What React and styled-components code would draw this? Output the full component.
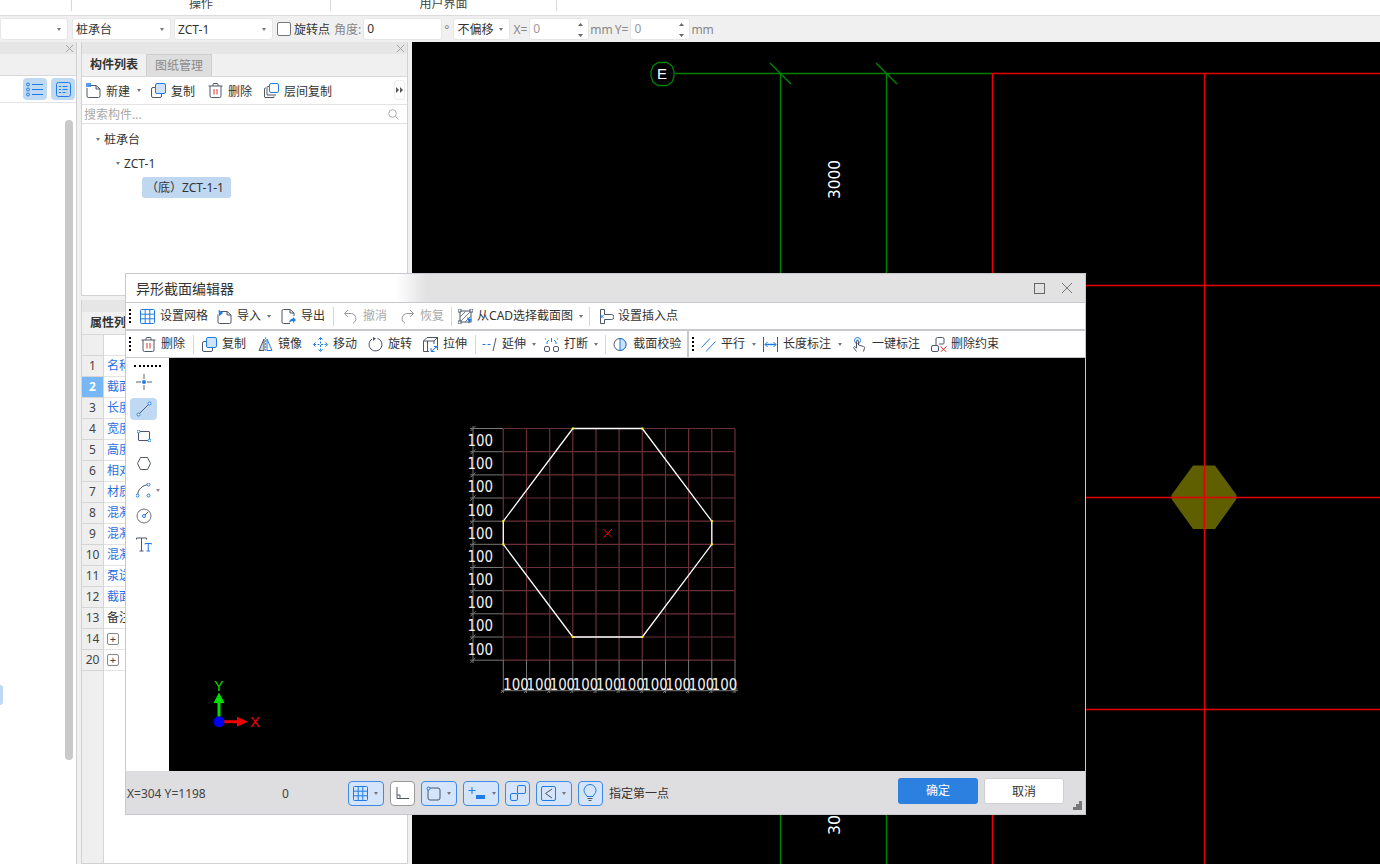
import React from "react";
import styled, { createGlobalStyle } from "styled-components";

const DARK = "#4f5668";
const BLUE = "#1f7ce6";
const UI_FONT = `"Noto Sans", "Noto Sans CJK SC", sans-serif`;

const Global = createGlobalStyle`
  html, body { margin: 0; padding: 0; background: #f0f0f0; }
  * { box-sizing: border-box; }
`;

const Page = styled.div`
  position: relative;
  width: 1380px;
  height: 864px;
  overflow: hidden;
  display: flex;
  flex-direction: column;
  background: #f0f0f0;
  font-family: ${UI_FONT};
  font-size: 12px;
  color: #333;
`;

/* ribbon + option bar */
const Ribbon = styled.div`
  height: 16px;
  flex: none;
  display: flex;
  background: #fff;
  border-bottom: 1px solid #dcdcdc;
`;
const RibbonCell = styled.div`
  width: ${(p) => p.$w}px;
  height: 11px;
  line-height: 8px;
  text-align: center;
  color: #444;
  border-right: ${(p) => (p.$plain ? "none" : "1px solid #d8d8d8")};
`;
const OptionBar = styled.div`
  height: 26px;
  flex: none;
  display: flex;
  align-items: center;
  background: #f0f0f0;
`;
const Select = styled.div`
  width: ${(p) => p.$w}px;
  margin-left: ${(p) => p.$ml || 0}px;
  height: 22px;
  display: flex;
  align-items: center;
  justify-content: space-between;
  padding: 0 6px 0 3px;
  background: #fff;
  border: 1px solid #e6e6e6;
  border-radius: 3px;
  color: #333;
`;
const Caret = styled.i`
  flex: none;
  width: 0;
  height: 0;
  margin-left: ${(p) => p.$ml || 0}px;
  border-left: 2.5px solid transparent;
  border-right: 2.5px solid transparent;
  border-top: 3px solid #777;
`;
const Check = styled.div`
  width: 14px;
  height: 14px;
  margin-left: 4px;
  background: #fff;
  border: 1px solid #777;
  border-radius: 2px;
`;
const OptLabel = styled.span`
  margin-left: ${(p) => p.$ml || 0}px;
  color: ${(p) => p.$c || "#888"};
  white-space: nowrap;
`;
const NumField = styled.div`
  position: relative;
  width: ${(p) => p.$w}px;
  margin-left: ${(p) => p.$ml || 0}px;
  height: 22px;
  line-height: 20px;
  padding-left: 3px;
  background: #fff;
  border: 1px solid #e6e6e6;
  border-radius: 3px;
  color: ${(p) => p.$c || "#999"};
`;
const Spin = styled.svg`
  position: absolute;
  right: 4px;
  top: 3px;
`;

/* main area */
const Main = styled.div`
  flex: 1;
  min-height: 0;
  display: flex;
`;
const LeftPanel = styled.div`
  position: relative;
  width: 77px;
  flex: none;
  display: flex;
  flex-direction: column;
  background: #fff;
  border-right: 1px solid #cfcfcf;
`;
const PanelHead = styled.div`
  height: 12px;
  flex: none;
  display: flex;
  justify-content: flex-end;
  align-items: center;
  padding-right: 3px;
  background: #e6e6e6;
  color: #999;
`;
const LeftTabs = styled.div`
  height: 22px;
  flex: none;
  background: #f0f0f0;
  border-bottom: 1px solid #d8d8d8;
`;
const LeftTools = styled.div`
  height: 27px;
  flex: none;
  display: flex;
  justify-content: flex-end;
  align-items: center;
  gap: 4px;
  padding-right: 1px;
  border-bottom: 1px solid #e3e3e3;
`;
const ToggleBtn = styled.div`
  width: 24px;
  height: 22px;
  display: flex;
  align-items: center;
  justify-content: center;
  background: #c0d9f3;
  border-radius: 4px;
`;
const Scrollbar = styled.div`
  position: absolute;
  left: 65px;
  top: 78px;
  width: 8px;
  height: 640px;
  background: #c9c9c9;
  border-radius: 4px;
`;
const SideChip = styled.div`
  position: absolute;
  left: 0;
  top: 643px;
  width: 3px;
  height: 20px;
  background: #bed7f2;
  border-radius: 0 3px 3px 0;
`;
const MiddleColumn = styled.div`
  width: 327px;
  flex: none;
  margin: 0 4px;
  display: flex;
  flex-direction: column;
  gap: 4px;
`;
const Panel = styled.div`
  display: flex;
  flex-direction: column;
  background: #fff;
  border: 1px solid #d2d2d2;
  border-top: none;
  height: ${(p) => (p.$h ? `${p.$h}px` : "auto")};
  flex: ${(p) => (p.$h ? "none" : 1)};
  min-height: 0;
`;
const TabRow = styled.div`
  height: 23px;
  flex: none;
  display: flex;
  background: #f0f0f0;
  border-bottom: 1px solid #d8d8d8;
`;
const Tab = styled.div`
  width: 65px;
  text-align: center;
  line-height: 22px;
  font-weight: ${(p) => (p.$active ? 700 : 400)};
  color: ${(p) => (p.$active ? "#333" : "#8a8a8a")};
  background: ${(p) => (p.$active ? "#f0f0f0" : "#dedede")};
  border-right: 1px solid #cfcfcf;
  border-top: ${(p) => (p.$active ? "none" : "1px solid #cfcfcf")};
`;
const PanelTools = styled.div`
  position: relative;
  height: 28px;
  flex: none;
  display: flex;
  align-items: center;
  border-bottom: 1px solid #e3e3e3;
`;
const MoreBtn = styled.div`
  position: absolute;
  right: 2px;
  top: 3px;
  width: 11px;
  height: 20px;
  display: flex;
  align-items: center;
  justify-content: center;
  background: #fff;
  border: 1px solid #ececec;
  border-radius: 3px;
`;
const Search = styled.div`
  height: 19px;
  flex: none;
  display: flex;
  align-items: center;
  justify-content: space-between;
  padding: 0 8px 0 2px;
  color: #aaa;
  border-bottom: 1px solid #e0e0e0;
`;
const Tree = styled.div`
  flex: 1;
  padding-top: 3px;
`;
const TreeRow = styled.div`
  height: 24px;
  display: flex;
  align-items: center;
  padding-left: ${(p) => p.$indent}px;
  gap: 4px;
`;
const TreeChip = styled.div`
  width: 89px;
  height: 21px;
  line-height: 21px;
  padding-left: 4px;
  background: #bfd7f0;
  border-radius: 3px;
  white-space: nowrap;
`;
const Table = styled.div`
  flex: 1;
  display: flex;
  flex-direction: column;
  min-height: 0;
`;
const Row = styled.div`
  height: 21px;
  flex: none;
  display: flex;
`;
const NumCell = styled.div`
  width: 22px;
  flex: none;
  line-height: 20px;
  text-align: center;
  background: ${(p) => (p.$sel ? "#78b7f5" : "#efefef")};
  color: ${(p) => (p.$sel ? "#fff" : "#444")};
  font-weight: ${(p) => (p.$sel ? 700 : 400)};
  border-right: 1px solid #d5d5d5;
  border-bottom: 1px solid #d5d5d5;
`;
const NameCell = styled.div`
  flex: 1;
  line-height: 20px;
  padding-left: 3px;
  color: ${(p) => (p.$plain ? "#333" : "#2a6fe0")};
  border-bottom: 1px solid #e3e3e3;
  display: flex;
  align-items: center;
`;
const PlusBox = styled.span`
  width: 12px;
  height: 12px;
  line-height: 9px;
  text-align: center;
  border: 1px solid #888;
  border-radius: 2px;
  color: #444;
  font-size: 11px;
`;
const TableFill = styled.div`
  flex: 1;
  width: 22px;
  background: #efefef;
  border-right: 1px solid #d5d5d5;
`;
const CadArea = styled.div`
  flex: 1;
  background: #000;
  line-height: 0;
`;

/* dialog window */
const Dialog = styled.div`
  position: absolute;
  left: 125px;
  top: 273px;
  width: 961px;
  height: 542px;
  display: flex;
  flex-direction: column;
  background: #c8c9cf;
  border: 1px solid #c8c9cf;
`;
const TitleBar = styled.div`
  height: 28px;
  flex: none;
  display: flex;
  align-items: center;
  justify-content: space-between;
  padding: 0 13px 0 10px;
  font-size: 14px;
  color: #333;
  background: linear-gradient(90deg, #fff 0, #fff 270px, #e2e2e2 300px);
  margin-bottom: 1px;
`;
const WinButtons = styled.div`
  display: flex;
  gap: 17px;
  align-items: center;
`;
const Strip = styled.div`
  height: 26px;
  flex: none;
  display: flex;
  align-items: center;
  margin-bottom: ${(p) => p.$mb}px;
  background: #fff;
  white-space: nowrap;
  line-height: 1;
`;
const StripPart = styled.div`
  width: ${(p) => (p.$w ? `${p.$w}px` : "auto")};
  flex: ${(p) => (p.$w ? "none" : 1)};
  height: 100%;
  display: flex;
  align-items: center;
  background: #fff;
  border-left: ${(p) => (p.$split ? "2px solid #c8c9cf" : "none")};
`;
const Grip = styled.div`
  width: 2px;
  height: 14px;
  flex: none;
  margin-left: ${(p) => p.$ml}px;
  border-left: 2px dotted #000;
`;
const Tool = styled.div`
  display: flex;
  align-items: center;
  gap: ${(p) => (p.$gap === undefined ? 5 : p.$gap)}px;
  margin-left: ${(p) => p.$ml || 0}px;
  color: ${(p) => (p.$off ? "#aaa" : "#333")};
  svg {
    flex: none;
  }
`;
const Sep = styled.div`
  width: 1px;
  height: 19px;
  flex: none;
  margin-left: ${(p) => p.$ml}px;
  background: #d6d6d6;
`;
const Body = styled.div`
  flex: 1;
  min-height: 0;
  display: flex;
  background: #000;
`;
const ToolColumn = styled.div`
  width: 43px;
  flex: none;
  display: flex;
  flex-direction: column;
  align-items: flex-start;
  padding: 7px 0 0 4px;
  background: #fff;
`;
const HGrip = styled.div`
  width: 27px;
  height: 2px;
  margin: 0 0 3px 4px;
  border-top: 2px dotted #000;
`;
const ColTool = styled.div`
  position: relative;
  width: 27px;
  height: 22px;
  margin-top: ${(p) => p.$mt}px;
  display: flex;
  align-items: center;
  justify-content: center;
  border-radius: 4px;
  background: ${(p) => (p.$active ? "#c0d9f3" : "transparent")};
`;
const SideCaret = styled.i`
  position: absolute;
  left: 26px;
  top: 10px;
  border-left: 2.5px solid transparent;
  border-right: 2.5px solid transparent;
  border-top: 3px solid #888;
`;
const StatusBar = styled.div`
  position: relative;
  height: 43px;
  flex: none;
  display: flex;
  align-items: center;
  background: #dedee0;
  color: #444;
`;
const StatusText = styled.div`
  width: ${(p) => p.$w}px;
  flex: none;
  margin-top: 1px;
  padding-left: ${(p) => p.$pl || 0}px;
  color: ${(p) => p.$c || "#444"};
  white-space: nowrap;
`;
const SnapBtn = styled.div`
  width: ${(p) => p.$w}px;
  height: 25px;
  flex: none;
  margin-left: ${(p) => p.$ml}px;
  margin-top: 1px;
  display: flex;
  align-items: center;
  padding-left: 4px;
  gap: 6px;
  background: ${(p) => (p.$off ? "#fff" : "#d3e4fb")};
  border: 1px solid ${(p) => (p.$off ? "#999" : "#3d8ae8")};
  border-radius: 4px;
`;
const DialogBtn = styled.div`
  width: 80px;
  height: 26px;
  flex: none;
  margin-left: ${(p) => p.$ml}px;
  margin-top: -4px;
  line-height: 26px;
  text-align: center;
  border-radius: 3px;
  background: ${(p) => (p.$primary ? "#2b80e0" : "#fff")};
  color: ${(p) => (p.$primary ? "#fff" : "#333")};
  border: ${(p) => (p.$primary ? "none" : "1px solid #cfcfcf")};
`;
const ResizeGrip = styled.svg`
  position: absolute;
  right: 3px;
  bottom: 4px;
`;

/* icons */
const Ico = ({ children, w = 15, h = 15, vb }) => (
  <svg width={w} height={h} viewBox={vb || `0 0 ${w} ${h}`} fill="none" stroke={DARK} strokeWidth="1">
    {children}
  </svg>
);
const GridIco = ({ w = 15 }) => (
  <Ico w={w} h={15}>
    <rect x="0.5" y="0.5" width="14" height="14" rx="1" stroke={BLUE} />
    <path d="M5.2 1v13M9.8 1v13M1 5.2h13M1 9.8h13" stroke={BLUE} />
  </Ico>
);
const NewIco = () => (
  <Ico>
    <path d="M3.5 2.5H10l4 3.5v7a1.5 1.5 0 0 1-1.5 1.5h-10A1.5 1.5 0 0 1 1 13V5" />
    <path d="M10 2.5V6h4" />
    <rect x="0" y="0" width="5" height="4" fill={BLUE} stroke="none" opacity=".75" />
  </Ico>
);
const ImportIco = () => (
  <Ico>
    <path d="M4 2.5h6l4 3.5v7a1.5 1.5 0 0 1-1.5 1.5h-10A1.5 1.5 0 0 1 1 13V5.5" />
    <path d="M10 2.5V6h4" />
    <path d="M2 1.5l3.5 2.5L2.5 6.5z" fill={BLUE} stroke={BLUE} />
  </Ico>
);
const ExportIco = () => (
  <Ico>
    <path d="M9 14.5H2.5A1.5 1.5 0 0 1 1 13V2A1.5 1.5 0 0 1 2.5.5H9l4 3.5v3" />
    <path d="M9 .5V4h4" />
    <path d="M8 14c.3-3 2-4.500 4-4.500V8l3 3-3 3v-2c-1.500 0-3 .8-4 2z" fill={BLUE} stroke="none" />
  </Ico>
);
const UndoIco = ({ flip }) => (
  <Ico>
    <g transform={flip ? "translate(15 0) scale(-1 1)" : undefined} stroke="#9b9b9b">
      <path d="M1.500 4.500h7a5 5 0 0 1 1.500 9.500" />
      <path d="M5 1L1.500 4.500 5 8" />
    </g>
  </Ico>
);
const CadPickIco = () => (
  <Ico>
    <rect x="2" y="2" width="11" height="11" />
    <path d="M2 8L8 2M2 13L13 2M7 13l6-6" stroke="#7a8090" />
    <path d="M0 0h3v3H0zM12 0h3v3h-3zM0 12h3v3H0z" fill="#fff" />
    <path d="M9 8l5 3-2 1-1 3z" fill={BLUE} stroke="none" />
  </Ico>
);
const InsertIco = () => (
  <Ico>
    <path d="M1.500.5h4v5h7a1.500 1.500 0 0 1 0 5h-7v4h-4z" />
    <path d="M1.500 6l3 3M4.500 6l-3 3" stroke={BLUE} />
  </Ico>
);
const TrashIco = () => (
  <Ico>
    <path d="M.5 3h14M5 3V1.500A1 1 0 0 1 6 .5h3a1 1 0 0 1 1 1V3" />
    <path d="M2 3v10a1.500 1.500 0 0 0 1.500 1.500h8A1.500 1.500 0 0 0 13 13V3" />
    <path d="M6 6v5.500M9 6v5.500" stroke="#e23030" />
  </Ico>
);
const CopyIco = () => (
  <Ico>
    <path d="M4 4.500H2A1.500 1.500 0 0 0 .5 6v7A1.500 1.500 0 0 0 2 14.500h7a1.500 1.500 0 0 0 1.500-1.500v-2" />
    <rect x="4.500" y=".5" width="10" height="10" rx="1.500" fill="#cfe2fa" stroke={BLUE} />
  </Ico>
);
const FloorCopyIco = () => (
  <Ico>
    <path d="M2 5H1.500A1 1 0 0 0 .5 6v8a1 1 0 0 0 .5.5h9v-1" />
    <path d="M5 3.500H4A1 1 0 0 0 3 4.500V12h9" />
    <rect x="5.500" y=".5" width="9" height="9" rx="1.500" fill="#fff" stroke={BLUE} />
  </Ico>
);
const MirrorIco = () => (
  <Ico>
    <path d="M6 2L1 13.500h5z" fill="#d3d6dc" />
    <path d="M9 2l5 11.500H9z" stroke={BLUE} />
    <path d="M7.500 0v15" stroke="#8d93a0" strokeDasharray="2 1" />
  </Ico>
);
const MoveIco = () => (
  <Ico>
    <path d="M7.500 1v13M1 7.500h13" stroke={BLUE} strokeDasharray="2 1.500" />
    <path d="M5.500 2.500l2-2 2 2M5.500 12.500l2 2 2-2M2.500 5.500l-2 2 2 2M12.500 5.500l2 2-2 2" stroke={BLUE} />
  </Ico>
);
const RotateIco = () => (
  <Ico>
    <path d="M9.500 1.300A6.500 6.500 0 1 1 4 2" />
    <path d="M5 0L8 1.500 5 4z" fill={DARK} stroke="none" />
  </Ico>
);
const StretchIco = () => (
  <Ico>
    <path d="M.5 4L4 .5h10.500V9l-2 2M.5 4v10.500H6M.5 4H11v3M11 4l3.500-3.500M4.500 4v10" />
    <path d="M8 14.500l6-5M8 11v3.500h3.500M11 9.500h3.500V13" stroke={BLUE} />
  </Ico>
);
const ExtendIco = () => (
  <Ico>
    <path d="M.5 7.500h3M5.500 7.500h3" stroke={BLUE} />
    <path d="M11 14L14 1" stroke={DARK} />
  </Ico>
);
const BreakIco = () => (
  <Ico>
    <rect x=".5" y="9.500" width="5" height="5" rx="1.500" />
    <rect x="9.500" y="9.500" width="5" height="5" rx="1.500" />
    <path d="M3 7V5l2-2M12 7V5l-2-2M1 2h1M13 2h1M7.500 1v4" stroke={BLUE} />
  </Ico>
);
const CheckSecIco = () => (
  <Ico>
    <circle cx="7" cy="7.500" r="6" />
    <path d="M7 1.500a6 6 0 0 1 0 12z" fill="#cfe2fa" stroke={BLUE} />
  </Ico>
);
const ParallelIco = () => (
  <Ico>
    <path d="M.5 10.500L9 1.500M5 14.500L14.500 4.500" stroke={BLUE} />
  </Ico>
);
const LengthIco = () => (
  <Ico>
    <path d="M.5 0v15M14.500 0v15" />
    <path d="M2 7.500h11" stroke={BLUE} strokeWidth="1.500" />
    <path d="M4.500 5L2 7.500 4.500 10M10.500 5L13 7.500 10.500 10" stroke={BLUE} />
  </Ico>
);
const TapIco = () => (
  <Ico>
    <circle cx="5.500" cy="3.500" r="3" stroke={BLUE} />
    <circle cx="5.500" cy="3.500" r="1" fill={BLUE} stroke="none" />
    <path d="M4.500 14.500L1.500 10.500l1-1 2 1.500V4.500a1 1 0 0 1 2 0V8l5 1.500a1 1 0 0 1 1 1.500l-1 3.500" />
  </Ico>
);
const DelConstraintIco = () => (
  <Ico w={16}>
    <rect x=".5" y="8.500" width="7" height="6" rx="1.500" />
    <path d="M5 8.500V2A1.500 1.500 0 0 1 6.500.5h5A1.500 1.500 0 0 1 13 2v4a1 1 0 0 1-1 1H8" />
    <path d="M9.500 9.500l6 5.500M15.500 9.500l-6 5.500" stroke="#e23030" />
  </Ico>
);
const ListIco = () => (
  <Ico w={18} h={15}>
    <circle cx="2" cy="2.500" r="1.500" stroke={BLUE} />
    <circle cx="2" cy="7.500" r="1.500" stroke={BLUE} />
    <circle cx="2" cy="12.500" r="1.500" stroke={BLUE} />
    <path d="M6 2.500h11M6 7.500h11M6 12.500h11" stroke={BLUE} />
  </Ico>
);
const DetailIco = () => (
  <Ico>
    <rect x=".5" y=".5" width="14" height="14" rx="2" stroke={BLUE} />
    <path d="M3 4.500h2M6.500 4.500h5M3 7.500h2M6.500 7.500h5M3 10.500h2M6.500 10.500h3" stroke={BLUE} />
  </Ico>
);
const Node = ({ x, y }) => <circle cx={x} cy={y} r="1.500" fill="#fff" stroke={BLUE} />;
const PointIco = () => (
  <Ico w={16} h={16}>
    <path d="M8 0v5M8 11v5M0 8h5M11 8h5" stroke="#5b6275" />
    <circle cx="8" cy="8" r="2" fill={BLUE} stroke="none" />
  </Ico>
);
const LineIco = () => (
  <Ico w={16} h={16}>
    <path d="M2.500 13.500l11-11" />
    <Node x={2.500} y={13.500} />
    <Node x={13.500} y={2.500} />
  </Ico>
);
const RectIco = () => (
  <Ico w={14} h={12}>
    <rect x="1.500" y="1.500" width="11" height="9" rx=".5" />
    <Node x={1.500} y={1.500} />
    <Node x={12.500} y={10.500} />
  </Ico>
);
const HexIco = () => (
  <Ico w={14} h={13}>
    <path d="M3.500.5h7l3 6-3 6h-7l-3-6z" />
  </Ico>
);
const ArcIco = () => (
  <Ico w={15} h={15}>
    <path d="M1.500 12.500C2 6 6 2.500 12.500 1.500" />
    <Node x={1.500} y={12.500} />
    <Node x={12.500} y={1.500} />
    <Node x={12.500} y={12.500} />
  </Ico>
);
const DialIco = () => (
  <Ico w={16} h={16}>
    <circle cx="8" cy="8" r="7" stroke="#6b7180" />
    <path d="M8 8l4-4" />
    <Node x={8} y={8} />
  </Ico>
);
const TextIco = () => (
  <Ico w={16} h={15}>
    <path d="M.5 2.500V1h10v1.500M5.500 1v13M3.500 14h4" />
    <path d="M9 7.500V6.500h6.500v1M12.250 6.500V14M10.500 14H14" stroke={BLUE} />
  </Ico>
);
const CornerIco = () => (
  <Ico w={14} h={14}>
    <path d="M2 1v11.500h12" />
    <path d="M2 9h3v3.500" />
  </Ico>
);
const RectSnapIco = () => (
  <Ico w={15} h={15}>
    <rect x="2" y="2" width="12" height="12" rx="2" />
    <circle cx="2.500" cy="2.500" r="1.500" fill="#d3e4fb" stroke={BLUE} />
  </Ico>
);
const PlusBarIco = () => (
  <Ico w={18} h={15}>
    <path d="M4 1v7M.5 4.500h7" stroke={BLUE} />
    <rect x="8" y="9" width="9" height="4" fill={BLUE} stroke="none" />
  </Ico>
);
const LinkBoxIco = () => (
  <Ico w={16} h={16}>
    <rect x=".5" y="8.500" width="7" height="7" rx="1.500" stroke={BLUE} />
    <path d="M7.500 8.500V2A1.500 1.500 0 0 1 9 .5h5A1.500 1.500 0 0 1 15.500 2v5a1.500 1.500 0 0 1-1.500 1.500H7.500" stroke={BLUE} />
  </Ico>
);
const AngleBoxIco = () => (
  <Ico w={15} h={15}>
    <rect x=".5" y=".5" width="14" height="14" rx="1.500" stroke={BLUE} />
    <path d="M11 3L4.500 7.500 11 12" stroke={DARK} />
  </Ico>
);
const BulbIco = () => (
  <Ico w={14} h={18}>
    <path d="M4 12.500C3.500 10.500 1 9.500 1 6.500a6 6 0 0 1 12 0c0 3-2.500 4-3 6z" stroke={BLUE} />
    <path d="M4.500 14.500h5M5.500 16.500h3" stroke={DARK} />
  </Ico>
);
const SearchIco = () => (
  <Ico w={11} h={11}>
    <circle cx="4.500" cy="4.500" r="3.800" stroke="#aaa" />
    <path d="M7.500 7.500l3 3" stroke="#aaa" />
  </Ico>
);
const CloseIco = ({ s = 7, c = "#a5a5a5" }) => (
  <svg width={s} height={s} viewBox={`0 0 ${s} ${s}`} stroke={c} fill="none">
    <path d={`M0 0L${s} ${s}M${s} 0L0 ${s}`} />
  </svg>
);

/* background drawing */
const GREEN = "#008000";
const RED = "#e80000";
const MainDrawing = () => (
  <svg width="968" height="822" viewBox="412 42 968 822" fill="none">
    <path d="M675 73.500H992M780.500 73.500V864M886.500 73.500V864" stroke={GREEN} strokeWidth="1.500" />
    <path d="M770 63l21 21M876 63l21 21" stroke={GREEN} strokeWidth="1.500" />
    <path
      d="M667 62.500l5 3.500 2 5.500v5l-2 5.500-5 3.500h-9l-5-3.500-2-5.500v-5l2-5.500 5-3.500z"
      stroke={GREEN}
      strokeWidth="1.300"
      transform="translate(0 0)"
    />
    <text x="662" y="79" fontFamily="Liberation Sans" fontSize="15" fill="#fff" textAnchor="middle">E</text>
    <text transform="translate(840 199) rotate(-90)" fontFamily="DejaVu Sans" fontSize="16" fill="#fff" textLength="39" lengthAdjust="spacingAndGlyphs">3000</text>
    <text transform="translate(840 835) rotate(-90)" fontFamily="DejaVu Sans" fontSize="16" fill="#fff" textLength="20" lengthAdjust="spacingAndGlyphs">30</text>
    <path d="M1193 465.500h22l21.500 29.500v4L1215 529h-22l-21.500-30v-4z" fill="#5f5f00" />
    <path d="M992 73.500H1380M992.500 73V864M1204.500 73V864M992 285.500H1380M992 497.500H1380M992 709.500H1380" stroke={RED} strokeWidth="1.500" />
  </svg>
);

const xs = Array.from({ length: 10 }, (_, i) => 503.3 + i * 23.17);
const ys = Array.from({ length: 10 }, (_, i) => 428.5 + i * 23.17);
const grid = [503.3, 526.5, 549.7, 572.8, 596, 619.1, 642.3, 665.5, 688.6, 711.8, 735];
const gridY = [428.5, 451.7, 474.9, 498, 521.2, 544.3, 567.5, 590.7, 613.8, 637, 660.2];
const vertices = [
  [572.8, 428.5], [642.3, 428.5], [711.8, 521.2], [711.8, 544.3],
  [642.3, 637], [572.8, 637], [503.3, 544.3], [503.3, 521.2],
];
const dimText = { fontFamily: "DejaVu Sans", fontSize: 16, fill: "#f2f2f2", textLength: 25.5, lengthAdjust: "spacingAndGlyphs" };

const SectionDrawing = () => (
  <svg width="916" height="413" viewBox="169 358 916 413" fill="none">
    {grid.map((x) => (
      <path key={x} d={`M${x} 428.5V660.2`} stroke="#6b3036" strokeWidth="1.200" />
    ))}
    {gridY.map((y) => (
      <path key={y} d={`M503.3 ${y}H735`} stroke="#6b3036" strokeWidth="1.200" />
    ))}
    {gridY.map((y) => (
      <path key={y} d={`M470 ${y}H503M470.500 ${y + 2.500}l5-5`} stroke="#777" />
    ))}
    <path d="M473 426V663" stroke="#777" />
    {grid.map((x) => (
      <path key={x} d={`M${x} 660V693M${x - 2.500} 693l5-5`} stroke="#777" />
    ))}
    <path d="M501 690.700H738" stroke="#777" />
    {ys.map((y) => (
      <text key={y} x="467.500" y={y + 17.500} {...dimText}>100</text>
    ))}
    {xs.map((x) => (
      <text key={x} x={x} y="689.500" {...dimText}>100</text>
    ))}
    <polygon points={vertices.map((v) => v.join(",")).join(" ")} stroke="#fff" strokeWidth="1.300" />
    {vertices.map(([x, y]) => (
      <rect key={`${x}-${y}`} x={x - 1} y={y - 1} width="2" height="2" fill="#ffff00" />
    ))}
    <path d="M603.500 529l8.500 8.500M612 529l-8.500 8.500" stroke="#f00000" />
    <path d="M219 722V702" stroke="#00e000" strokeWidth="3" />
    <path d="M219 692.500l5.500 10.500h-11z" fill="#00e000" />
    <path d="M222 721.700H238" stroke="#f00000" strokeWidth="3" />
    <path d="M248 721.700l-11-5v10z" fill="#f00000" />
    <circle cx="219" cy="721.700" r="5.500" fill="#0000f0" />
    <text x="219" y="691" textAnchor="middle" fontFamily="Liberation Sans" fontSize="14" fill="#00e000">Y</text>
    <text x="255" y="727" textAnchor="middle" fontFamily="Liberation Sans" fontSize="15" fill="#f00000">X</text>
  </svg>
);

const props = [
  ["1", "名称"], ["2", "截面形状"], ["3", "长度"], ["4", "宽度"], ["5", "高度"],
  ["6", "相对底标高"], ["7", "材质"], ["8", "混凝土类型"], ["9", "混凝土强度等级"],
  ["10", "混凝土外加剂"], ["11", "泵送类型"], ["12", "截面面积"],
];

export default function App() {
  return (
    <Page>
      <Global />
      <Ribbon>
        <RibbonCell $w={72} />
        <RibbonCell $w={259}>操作</RibbonCell>
        <RibbonCell $w={226}>用户界面</RibbonCell>
        <RibbonCell $w={100} $plain />
      </Ribbon>
      <OptionBar>
        <Select $w={68}>
          <span />
          <Caret />
        </Select>
        <Select $w={99} $ml={4}>
          桩承台
          <Caret />
        </Select>
        <Select $w={99} $ml={3}>
          ZCT-1
          <Caret />
        </Select>
        <Check />
        <OptLabel $ml={3} $c="#333">旋转点</OptLabel>
        <OptLabel $ml={4}>角度:</OptLabel>
        <NumField $w={79} $ml={2} $c="#333">0</NumField>
        <OptLabel $ml={2}>°</OptLabel>
        <Select $w={57} $ml={4}>
          不偏移
          <Caret />
        </Select>
        <OptLabel $ml={3}>X=</OptLabel>
        <NumField $w={60} $ml={2}>
          0
          <Spin width="7" height="16" viewBox="0 0 7 16" fill="#666">
            <path d="M3.500 1L6 4H1zM3.500 15L6 12H1z" />
          </Spin>
        </NumField>
        <OptLabel $ml={1}>mm</OptLabel>
        <OptLabel $ml={2}>Y=</OptLabel>
        <NumField $w={60} $ml={2}>
          0
          <Spin width="7" height="16" viewBox="0 0 7 16" fill="#666">
            <path d="M3.500 1L6 4H1zM3.500 15L6 12H1z" />
          </Spin>
        </NumField>
        <OptLabel $ml={1}>mm</OptLabel>
      </OptionBar>
      <Main>
        <LeftPanel>
          <PanelHead>
            <CloseIco />
          </PanelHead>
          <LeftTabs />
          <LeftTools>
            <ToggleBtn><ListIco /></ToggleBtn>
            <ToggleBtn><DetailIco /></ToggleBtn>
          </LeftTools>
          <Scrollbar />
          <SideChip />
        </LeftPanel>
        <MiddleColumn>
          <Panel $h={254}>
            <PanelHead>
              <CloseIco />
            </PanelHead>
            <TabRow>
              <Tab $active>构件列表</Tab>
              <Tab>图纸管理</Tab>
            </TabRow>
            <PanelTools>
              <Tool $ml={4}><NewIco />新建<Caret $ml={2} /></Tool>
              <Tool $ml={10}><CopyIco />复制</Tool>
              <Tool $ml={13}><TrashIco />删除</Tool>
              <Tool $ml={12}><FloorCopyIco />层间复制</Tool>
              <MoreBtn>
                <svg width="7" height="6" viewBox="0 0 7 6" fill="#555">
                  <path d="M0 0l3 3-3 3zM4 0l3 3-3 3z" />
                </svg>
              </MoreBtn>
            </PanelTools>
            <Search>
              搜索构件...
              <SearchIco />
            </Search>
            <Tree>
              <TreeRow $indent={14}><Caret $ml={0} />桩承台</TreeRow>
              <TreeRow $indent={34}><Caret $ml={0} />ZCT-1</TreeRow>
              <TreeRow $indent={60}>
                <TreeChip>（底）ZCT-1-1</TreeChip>
              </TreeRow>
            </Tree>
          </Panel>
          <Panel>
            <PanelHead />
            <TabRow>
              <Tab $active>属性列表</Tab>
            </TabRow>
            <Table>
              <Row>
                <NumCell />
                <NameCell />
              </Row>
              {props.map(([n, name]) => (
                <Row key={n}>
                  <NumCell $sel={n === "2"}>{n}</NumCell>
                  <NameCell>{name}</NameCell>
                </Row>
              ))}
              <Row>
                <NumCell>13</NumCell>
                <NameCell $plain>备注</NameCell>
              </Row>
              <Row>
                <NumCell>14</NumCell>
                <NameCell $plain><PlusBox>+</PlusBox></NameCell>
              </Row>
              <Row>
                <NumCell>20</NumCell>
                <NameCell $plain><PlusBox>+</PlusBox></NameCell>
              </Row>
              <TableFill />
            </Table>
          </Panel>
        </MiddleColumn>
        <CadArea>
          <MainDrawing />
        </CadArea>
      </Main>

      <Dialog>
        <TitleBar>
          异形截面编辑器
          <WinButtons>
            <svg width="11" height="11" fill="none" stroke="#666"><rect x=".5" y=".5" width="10" height="10" /></svg>
            <CloseIco s={10} c="#777" />
          </WinButtons>
        </TitleBar>
        <Strip $mb={2}>
          <Grip $ml={3} />
          <Tool $ml={9}><GridIco />设置网格</Tool>
          <Tool $ml={9}><ImportIco />导入<Caret $ml={1} /></Tool>
          <Tool $ml={10}><ExportIco />导出</Tool>
          <Sep $ml={8} />
          <Tool $ml={9} $off><UndoIco />撤消</Tool>
          <Tool $ml={13} $off><UndoIco flip />恢复</Tool>
          <Sep $ml={7} />
          <Tool $ml={6} $gap={4}><CadPickIco />从CAD选择截面图<Caret $ml={2} /></Tool>
          <Sep $ml={6} />
          <Tool $ml={9} $gap={4}><InsertIco />设置插入点</Tool>
        </Strip>
        <Strip $mb={1}>
          <StripPart $w={561}>
            <Grip $ml={3} />
            <Tool $ml={10}><TrashIco />删除</Tool>
            <Sep $ml={8} />
            <Tool $ml={8}><CopyIco />复制</Tool>
            <Tool $ml={12}><MirrorIco />镜像</Tool>
            <Tool $ml={11}><MoveIco />移动</Tool>
            <Tool $ml={11}><RotateIco />旋转</Tool>
            <Tool $ml={11}><StretchIco />拉伸</Tool>
            <Sep $ml={8} />
            <Tool $ml={6}><ExtendIco />延伸<Caret $ml={1} /></Tool>
            <Tool $ml={8}><BreakIco />打断<Caret $ml={1} /></Tool>
            <Sep $ml={7} />
            <Tool $ml={7}><CheckSecIco />截面校验</Tool>
          </StripPart>
          <StripPart $split>
            <Grip $ml={3} />
            <Tool $ml={7}><ParallelIco />平行<Caret $ml={2} /></Tool>
            <Tool $ml={7}><LengthIco />长度标注<Caret $ml={2} /></Tool>
            <Tool $ml={10}><TapIco />一键标注</Tool>
            <Tool $ml={11} $gap={4}><DelConstraintIco />删除约束</Tool>
          </StripPart>
        </Strip>
        <Body>
          <ToolColumn>
            <HGrip />
            <ColTool $mt={1}><PointIco /></ColTool>
            <ColTool $mt={5} $active><LineIco /></ColTool>
            <ColTool $mt={5}><RectIco /></ColTool>
            <ColTool $mt={5}><HexIco /></ColTool>
            <ColTool $mt={5}><ArcIco /><SideCaret /></ColTool>
            <ColTool $mt={4}><DialIco /></ColTool>
            <ColTool $mt={6}><TextIco /></ColTool>
          </ToolColumn>
          <SectionDrawing />
        </Body>
        <StatusBar>
          <StatusText $w={156} $pl={1}>X=304 Y=1198</StatusText>
          <StatusText $w={66}>0</StatusText>
          <SnapBtn $w={36} $ml={0}><GridIco /><Caret /></SnapBtn>
          <SnapBtn $w={25} $ml={6} $off><CornerIco /></SnapBtn>
          <SnapBtn $w={36} $ml={6}><RectSnapIco /><Caret /></SnapBtn>
          <SnapBtn $w={36} $ml={6}><PlusBarIco /><Caret /></SnapBtn>
          <SnapBtn $w={25} $ml={6}><LinkBoxIco /></SnapBtn>
          <SnapBtn $w={36} $ml={6}><AngleBoxIco /><Caret /></SnapBtn>
          <SnapBtn $w={25} $ml={6}><BulbIco /></SnapBtn>
          <StatusText $w={60} $pl={0} style={{ marginLeft: 6 }} $c="#333">指定第一点</StatusText>
          <DialogBtn $primary $ml={229}>确定</DialogBtn>
          <DialogBtn $ml={6}>取消</DialogBtn>
          <ResizeGrip width="9" height="9" viewBox="0 0 9 9" fill="#777">
            <path d="M6 0h3v3H6zM3 3h3v3H3zM6 3h3v3H6zM0 6h3v3H0zM3 6h3v3H3zM6 6h3v3H6z" />
          </ResizeGrip>
        </StatusBar>
      </Dialog>
    </Page>
  );
}
